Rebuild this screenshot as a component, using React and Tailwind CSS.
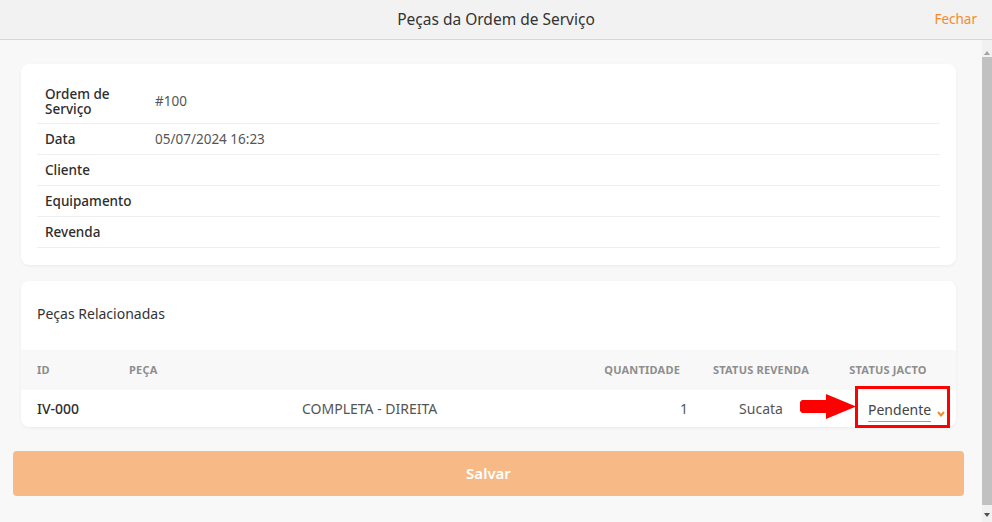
import React from "react";

const font = { fontFamily: '"Noto Sans", "Open Sans", sans-serif' };

function InfoRow({ label, value, tall }) {
  return (
    <div className={`flex border-b border-[#efefef] ${tall ? "h-[44px] items-center" : "h-[31px] items-center"}`}>
      <div className="w-[118px] pl-[8px] text-[13.5px] font-medium leading-[15px] text-[#2d2d2d]">{label}</div>
      <div className="text-[13.5px] text-[#555]">{value}</div>
    </div>
  );
}

export default function App() {
  return (
    <div className="flex h-[522px] w-[992px] flex-col overflow-hidden bg-[#f8f8f8]" style={font}>
      <div className="relative flex h-[40px] shrink-0 items-center justify-center border-b border-[#d6d6d6] bg-[#f2f2f2]">
        <span className="text-[15.5px] text-[#333]">Peças da Ordem de Serviço</span>
        <span className="absolute right-[15px] top-[9px] text-[13.5px] text-[#f58a2a]">Fechar</span>
      </div>
      <div className="flex min-h-0 flex-1">
        <div className="flex-1">
          <div className="ml-[21px] mr-[26px] mt-[24px] rounded-[8px] bg-white px-[16px] pb-[17px] pt-[16px] shadow-[0_1px_3px_rgba(0,0,0,0.06)]">
            <InfoRow tall label={<>Ordem de<br />Serviço</>} value="#100" />
            <InfoRow label="Data" value="05/07/2024 16:23" />
            <InfoRow label="Cliente" value="" />
            <InfoRow label="Equipamento" value="" />
            <InfoRow label="Revenda" value="" />
          </div>
          <div className="ml-[21px] mr-[26px] mt-[16px] rounded-[8px] bg-white shadow-[0_1px_3px_rgba(0,0,0,0.06)]">
            <div className="pb-[26px] pl-[16px] pt-[23px] text-[14px] leading-[20px] text-[#333]">Peças Relacionadas</div>
            <div className="flex h-[40px] items-center bg-[#f8f8f8] text-[11px] font-bold uppercase tracking-[0.2px] text-[#8e8e8e]">
              <div className="w-[92px] pl-[16px]">ID</div>
              <div className="w-[477px] pl-[16px]">Peça</div>
              <div className="w-[106px] pr-[16px] text-right">Quantidade</div>
              <div className="w-[130px] text-center">Status Revenda</div>
              <div className="w-[130px] pr-[6px] text-center">Status Jacto</div>
            </div>
            <div className="flex h-[37px] items-center text-[14px]">
              <div className="w-[92px] pl-[16px] font-medium text-[#2d2d2d]">IV-000</div>
              <div className="w-[477px] pl-[189px] text-[#555]">COMPLETA - DIREITA</div>
              <div className="w-[106px] pr-[8px] text-right text-[#555]">1</div>
              <div className="w-[130px] text-center text-[#555]">Sucata</div>
              <div className="relative flex h-full w-[130px] items-center">
                <div className="ml-[42px] mt-[4px] flex items-center">
                  <span className="border-b border-[#f58a2a] leading-[22px] text-[#444]">Pendente</span>
                  <svg className="ml-[6px] mt-[6px]" width="8" height="6" viewBox="0 0 8 6">
                    <path d="M1 1 L4 4.5 L7 1" fill="none" stroke="#f58a2a" strokeWidth="2" />
                  </svg>
                </div>
                <div className="absolute left-[29px] top-[-4px] h-[42px] w-[95px] border-[3px] border-[#ff0000]" />
                <svg className="absolute left-[-26px] top-[4px]" width="56" height="25" viewBox="0 0 56 25">
                  <polygon points="0,8 2,6 26,6 26,0 56,12.5 26,25 26,19 2,19 0,17" fill="#ff0000" />
                </svg>
              </div>
            </div>
          </div>
          <button className="ml-[13px] mt-[24px] flex h-[45px] w-[951px] items-center justify-center rounded-[4px] bg-[#f7b985] text-[15px] font-semibold text-white">
            Salvar
          </button>
        </div>
        <div className="flex w-[10px] flex-col bg-[#f1f1f1]">
          <div className="flex h-[17px] items-end justify-center pb-[2px]">
            <svg width="6" height="4" viewBox="0 0 6 4"><polygon points="0,4 3,0 6,4" fill="#a3a3a3" /></svg>
          </div>
          <div className="flex-1 bg-[#c1c1c1]" />
          <div className="flex h-[17px] items-start justify-center pt-[8px]">
            <svg width="6" height="4" viewBox="0 0 6 4"><polygon points="0,0 6,0 3,4" fill="#505050" /></svg>
          </div>
        </div>
      </div>
    </div>
  );
}
